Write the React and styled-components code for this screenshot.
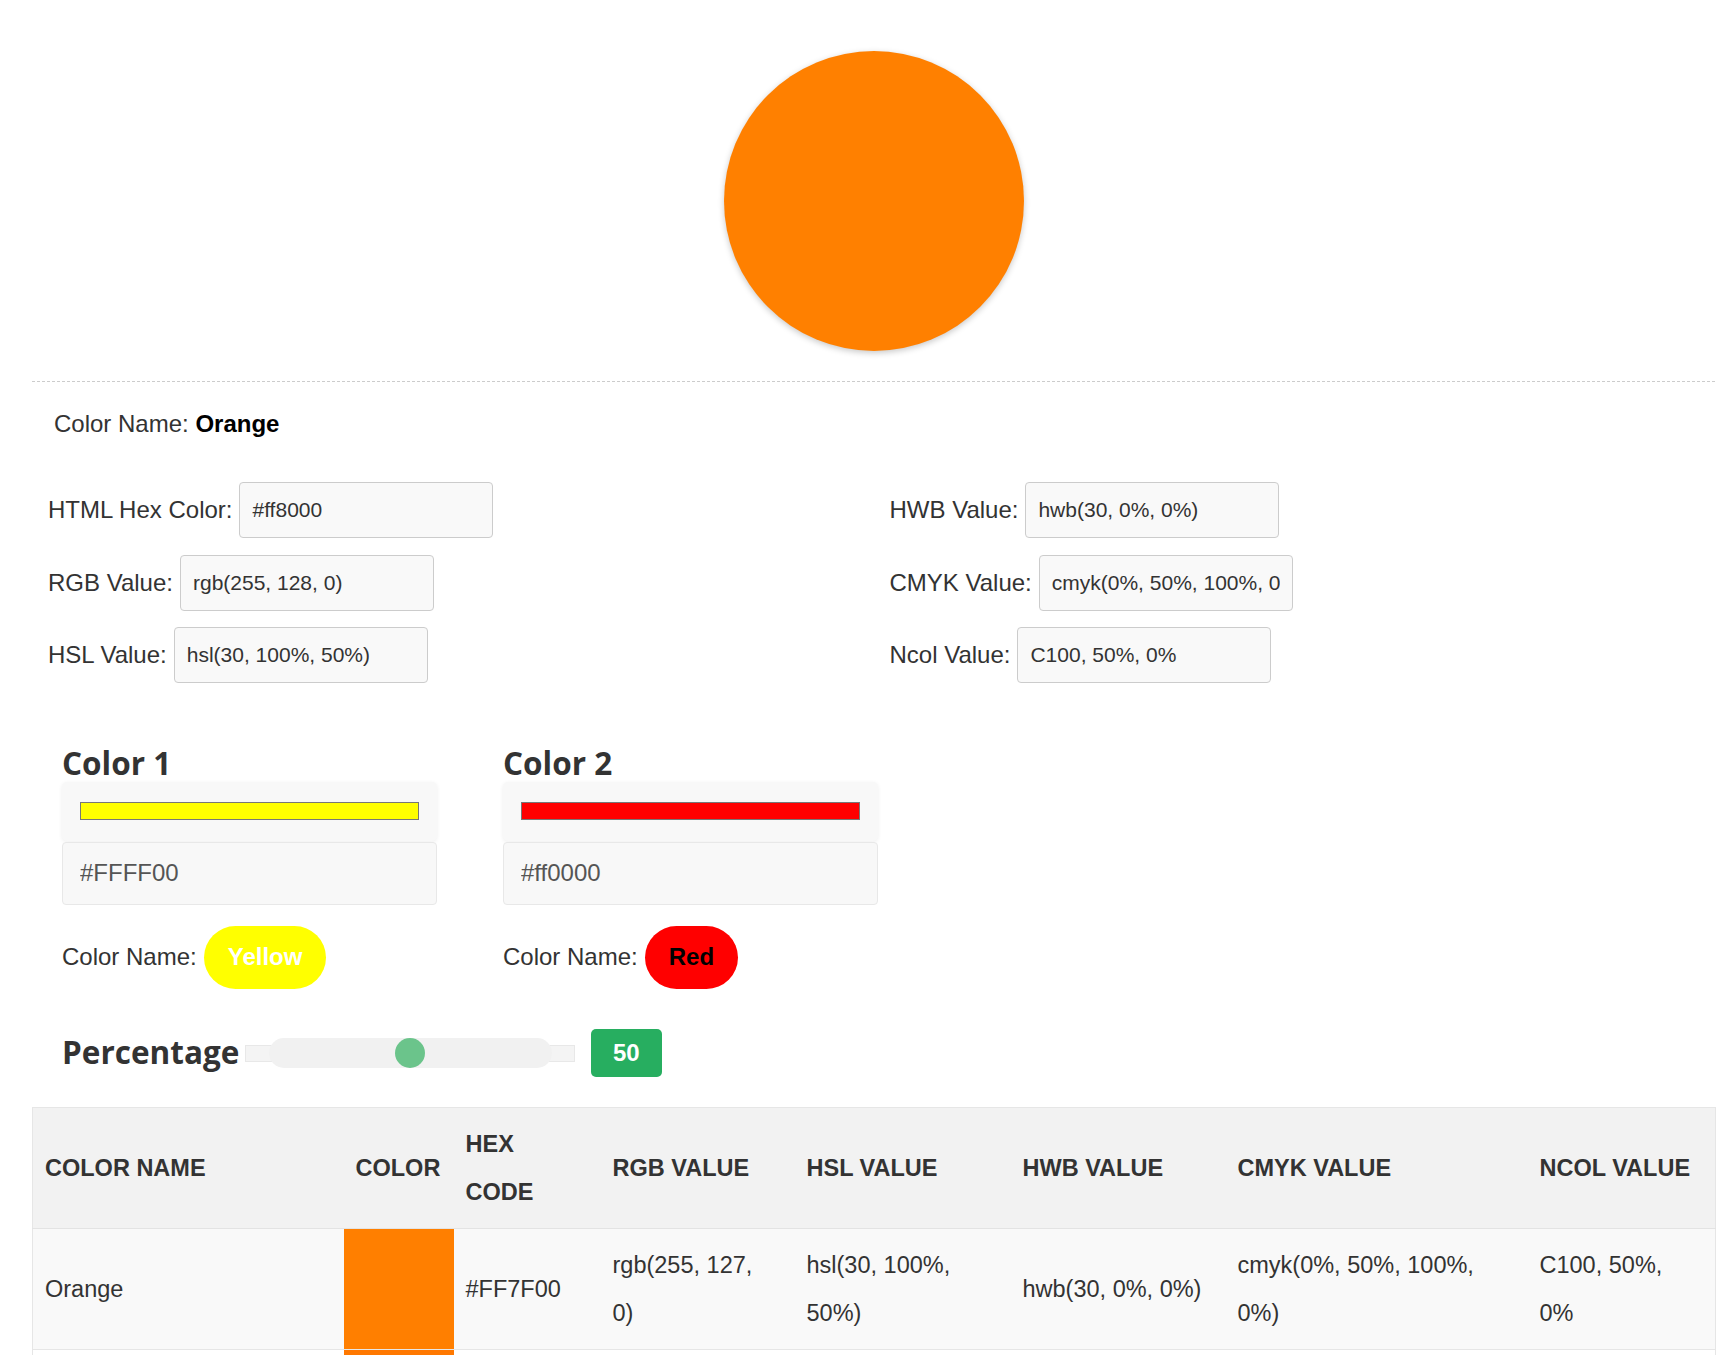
import styled, { createGlobalStyle } from 'styled-components';

const GlobalStyle = createGlobalStyle`
  * {
    box-sizing: border-box;
  }

  body {
    margin: 0;
    background: #fff;
    color: #333;
    font-family: "Liberation Sans", Arial, sans-serif;
  }
`;

// PAGE
const Page = styled.div`
  padding: 0 20px 0 32px;
`;

const Preview = styled.div`
  width: 300px;
  height: 300px;
  margin: 51px auto 0;
  border-radius: 50%;
  background: ${({ $color }) => $color};
  box-shadow: 0 2px 6px rgba(0, 0, 0, 0.22);
`;

const Divider = styled.hr`
  margin: 30px 0 0;
  border: 0;
  border-top: 1px dashed #ccc;
`;

const ColorNameLine = styled.div`
  margin: 24px 0 0 22px;
  font-size: 24px;
  line-height: 36px;

  strong {
    color: #000;
  }
`;

// VALORES
const InfoGrid = styled.div`
  display: grid;
  grid-template-columns: 1fr 1fr;
  margin-top: 40px;
`;

const InfoColumn = styled.div`
  display: flex;
  flex-direction: column;
  gap: 16.5px;
  padding: 0 16px;
`;

const Field = styled.div`
  display: flex;
  align-items: center;
  gap: 7px;
  height: 56px;
`;

const Label = styled.span`
  font-size: 24px;
  white-space: nowrap;
`;

const ValueInput = styled.input`
  width: 254px;
  height: 56px;
  padding: 0 12px;
  font-family: "Liberation Sans", Arial, sans-serif;
  font-size: 21px;
  color: #333;
  background: #f9f9f9;
  border: 1px solid #ccc;
  border-radius: 4px;
  outline: none;
`;

// MISTURA
const ColorSection = styled.div`
  display: flex;
  gap: 66px;
  margin-top: 63px;
  padding-left: 30px;
`;

const ColorColumn = styled.div`
  width: 375px;
`;

const Heading = styled.h2`
  margin: 0 0 1px;
  font-family: "Open Sans", "Liberation Sans", sans-serif;
  font-size: 31.5px;
  font-weight: 700;
  line-height: 1.1;
  color: #333;
`;

const SwatchBox = styled.div`
  height: 59px;
  padding: 20px 18px 0;
  background: #f8f8f8;
  border-radius: 5px;
  box-shadow: 0 1px 4px rgba(0, 0, 0, 0.07);
`;

const SwatchBar = styled.div`
  height: 18px;
  border: 1px solid #777;
  background: ${({ $color }) => $color};
`;

const HexInput = styled.input`
  display: block;
  width: 100%;
  height: 63px;
  margin-top: 1px;
  padding: 0 17px;
  font-family: "Liberation Sans", Arial, sans-serif;
  font-size: 24px;
  color: #555;
  background: #f8f8f8;
  border: 1px solid #e8e8e8;
  border-radius: 4px;
  outline: none;
`;

const NameRow = styled.div`
  display: flex;
  align-items: center;
  gap: 7px;
  margin-top: 21px;
  font-size: 24px;
`;

const Pill = styled.span`
  display: inline-flex;
  align-items: center;
  height: 63px;
  padding: 0 24px;
  border-radius: 32px;
  background: ${({ $bg }) => $bg};
  color: ${({ $fg }) => $fg};
  font-weight: 700;
`;

// PORCENTAGEM
const PercentRow = styled.div`
  display: flex;
  align-items: center;
  height: 48px;
  margin-top: 40px;
  padding-left: 30px;
`;

const PercentTitle = styled(Heading)`
  margin: 0 6px 0 0;
`;

const Slider = styled.div`
  position: relative;
  flex-shrink: 0;
  width: 330px;
  height: 30px;
`;

const SliderRail = styled.div`
  position: absolute;
  top: 7px;
  left: 0;
  right: 0;
  height: 17px;
  background: #f4f4f4;
  border: 1px solid #e8e8e8;
`;

const SliderTrack = styled.div`
  position: absolute;
  top: 0;
  bottom: 0;
  left: 23.5px;
  width: 283px;
  border-radius: 15px;
  background: #f1f1f1;
`;

const SliderThumb = styled.div`
  position: absolute;
  top: 0;
  width: 30px;
  height: 30px;
  margin-left: -15px;
  border-radius: 50%;
  background: #6bc48b;
`;

const Badge = styled.div`
  display: flex;
  align-items: center;
  justify-content: center;
  width: 71px;
  height: 48px;
  margin-left: 15.5px;
  border-radius: 5px;
  background: #27ae60;
  color: #fff;
  font-size: 24px;
  font-weight: 700;
`;

// TABELA
const Table = styled.table`
  width: 100%;
  margin-top: 30px;
  border-collapse: collapse;
  table-layout: fixed;
  border: 1px solid #e6e6e6;
  font-size: 23.5px;
  line-height: 48px;
  color: #333;
`;

const Col = styled.col`
  width: ${({ $w }) => $w}px;
`;

const HeadCell = styled.th`
  padding: 12px 16px 12px 12px;
  text-align: left;
  vertical-align: middle;
  font-weight: 700;
  background: #f2f2f2;
  border-bottom: 1px solid #e3e3e3;
`;

const Row = styled.tr`
  background: #f9f9f9;

  &:nth-child(even) {
    background: #fff;
  }
`;

const Cell = styled.td`
  padding: 12px 16px 12px 12px;
  vertical-align: middle;
  border-top: 1px solid #e6e6e6;
`;

const SwatchCell = styled.td`
  padding: 0;
  background: ${({ $color }) => $color};
  border-top: 1px solid #e6e6e6;
`;

const leftFields = [
  ['HTML Hex Color:', '#ff8000'],
  ['RGB Value:', 'rgb(255, 128, 0)'],
  ['HSL Value:', 'hsl(30, 100%, 50%)'],
];

const rightFields = [
  ['HWB Value:', 'hwb(30, 0%, 0%)'],
  ['CMYK Value:', 'cmyk(0%, 50%, 100%, 0%)'],
  ['Ncol Value:', 'C100, 50%, 0%'],
];

const mixColors = [
  { title: 'Color 1', hex: '#FFFF00', swatch: '#ffff00', name: 'Yellow', fg: '#fff' },
  { title: 'Color 2', hex: '#ff0000', swatch: '#ff0000', name: 'Red', fg: '#000' },
];

const columns = [
  ['COLOR NAME', 311],
  ['COLOR', 110],
  ['HEX CODE', 147],
  ['RGB VALUE', 194],
  ['HSL VALUE', 216],
  ['HWB VALUE', 215],
  ['CMYK VALUE', 302],
  ['NCOL VALUE', 188],
];

const rows = [
  {
    name: 'Orange',
    hex: '#FF7F00',
    rgb: 'rgb(255, 127, 0)',
    hsl: 'hsl(30, 100%, 50%)',
    hwb: 'hwb(30, 0%, 0%)',
    cmyk: 'cmyk(0%, 50%, 100%, 0%)',
    ncol: 'C100, 50%, 0%',
  },
  {
    name: 'Safety Orange',
    hex: '#FF7800',
    rgb: 'rgb(255, 120, 0)',
    hsl: 'hsl(28, 100%, 50%)',
    hwb: 'hwb(28, 0%, 0%)',
    cmyk: 'cmyk(0%, 53%, 100%, 0%)',
    ncol: 'R94, 0%, 0%',
  },
];

function App() {
  const percentage = 50;

  return (
    <Page>
      <GlobalStyle />
      <Preview $color="#ff8000" />
      <Divider />

      <ColorNameLine>
        Color Name: <strong>Orange</strong>
      </ColorNameLine>

      <InfoGrid>
        {[leftFields, rightFields].map((fields, i) => (
          <InfoColumn key={i}>
            {fields.map(([label, value]) => (
              <Field key={label}>
                <Label>{label}</Label>
                <ValueInput readOnly value={value} />
              </Field>
            ))}
          </InfoColumn>
        ))}
      </InfoGrid>

      <ColorSection>
        {mixColors.map((c) => (
          <ColorColumn key={c.title}>
            <Heading>{c.title}</Heading>
            <SwatchBox>
              <SwatchBar $color={c.swatch} />
            </SwatchBox>
            <HexInput readOnly value={c.hex} />
            <NameRow>
              Color Name:
              <Pill $bg={c.swatch} $fg={c.fg}>{c.name}</Pill>
            </NameRow>
          </ColorColumn>
        ))}
      </ColorSection>

      <PercentRow>
        <PercentTitle>Percentage</PercentTitle>
        <Slider>
          <SliderRail />
          <SliderTrack />
          <SliderThumb style={{ left: `${23.5 + (283 * percentage) / 100}px` }} />
        </Slider>
        <Badge>{percentage}</Badge>
      </PercentRow>

      <Table>
        <colgroup>
          {columns.map(([title, w]) => (
            <Col key={title} $w={w} />
          ))}
        </colgroup>
        <thead>
          <tr>
            {columns.map(([title]) => (
              <HeadCell key={title}>{title}</HeadCell>
            ))}
          </tr>
        </thead>
        <tbody>
          {rows.map((r) => (
            <Row key={r.name}>
              <Cell>{r.name}</Cell>
              <SwatchCell $color={r.hex} />
              <Cell>{r.hex}</Cell>
              <Cell>{r.rgb}</Cell>
              <Cell>{r.hsl}</Cell>
              <Cell>{r.hwb}</Cell>
              <Cell>{r.cmyk}</Cell>
              <Cell>{r.ncol}</Cell>
            </Row>
          ))}
        </tbody>
      </Table>
    </Page>
  );
}

export default App;
